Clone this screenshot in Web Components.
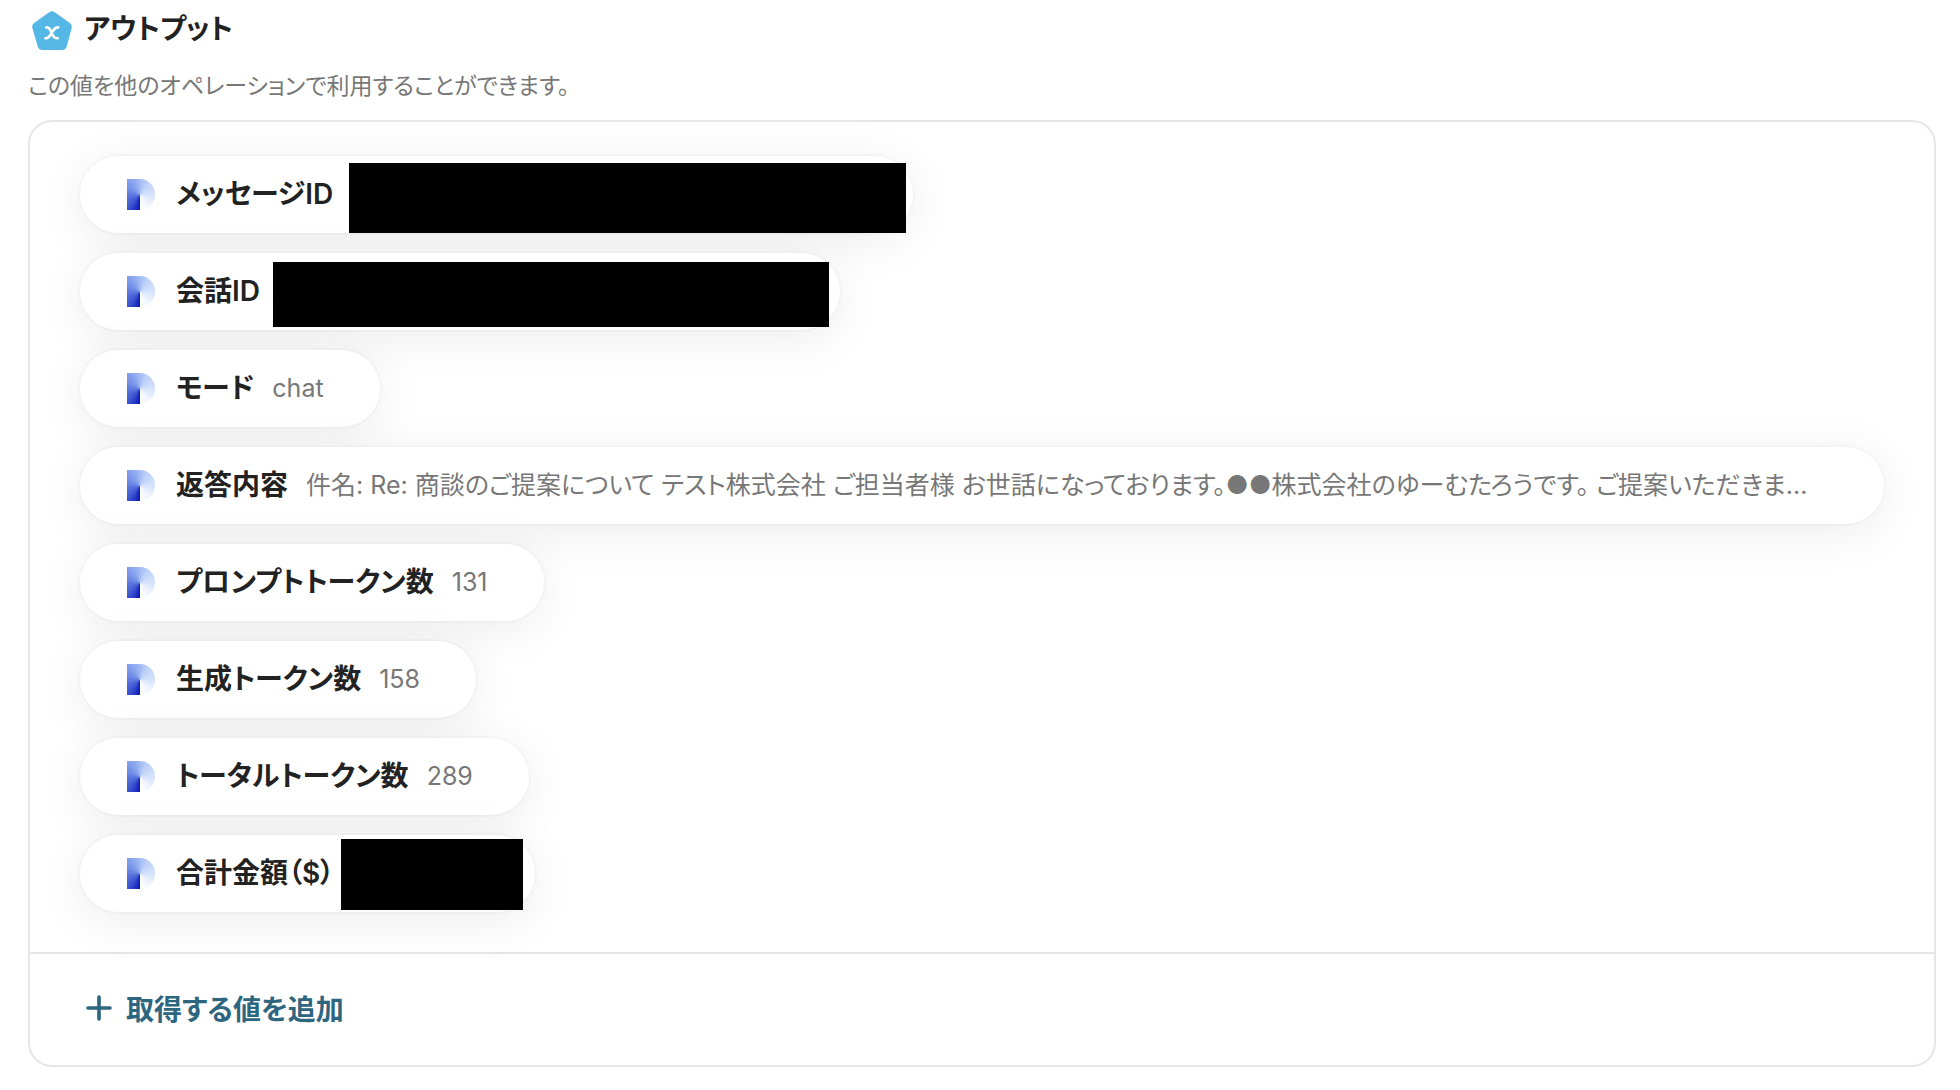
<!DOCTYPE html>
<html lang="ja">
<head>
<meta charset="utf-8">
<title>アウトプット</title>
<style>
  :root {
    --color-text: #222;
    --color-muted: #777;
    --color-border: #e6e6e6;
    --color-link: #2e6680;
    --text-sm: 23px;
    --text-md: 25px;
    --text-lg: 28px;
  }

  * {
    box-sizing: border-box;
  }

  body {
    margin: 0;
    background: #fff;
    color: var(--color-text);
    font-family: Inter, "Noto Sans CJK JP", sans-serif;
    font-feature-settings: "palt";
  }
</style>
</head>
<body>
<output-section>
  <span slot="title">アウトプット</span>
  <span slot="description">この値を他のオペレーションで利用することができます。</span>
  <output-pill label="メッセージID"><redacted-value style="--room: 506px; --width: 557px; --inset: 7px 7px 0 auto"></redacted-value></output-pill>
  <output-pill label="会話ID"><redacted-value style="--room: 506px; --width: 556px; --inset: 9px 11px 3px auto"></redacted-value></output-pill>
  <output-pill label="モード">chat</output-pill>
  <output-pill label="返答内容" wide>件名: Re: 商談のご提案について テスト株式会社 ご担当者様 お世話になっております。●●株式会社のゆーむたろうです。 ご提案いただきま...</output-pill>
  <output-pill label="プロンプトトークン数">131</output-pill>
  <output-pill label="生成トークン数">158</output-pill>
  <output-pill label="トータルトークン数">289</output-pill>
  <output-pill label="合計金額（$）"><redacted-value style="--room: 127px; --width: 182px; --inset: 4px 12px 2px auto"></redacted-value></output-pill>
  <add-button slot="footer">取得する値を追加</add-button>
</output-section>

<script>
/* Card with a heading, a list of pills and a footer */
class OutputSection extends HTMLElement {
  constructor() {
    super();
    this.attachShadow({ mode: 'open' });
  }

  connectedCallback() {
    this.shadowRoot.innerHTML = `
      <style>
        :host {
          display: block;
          padding: 8px 24px 24px 28px;
        }

        header {
          display: flex;
          align-items: center;
          gap: 10px;
          height: 44px;
          padding-left: 2px;
        }

        header svg {
          flex: none;
          width: 44px;
          height: 44px;
        }

        h2 {
          margin: 0;
          padding-bottom: 2px;
          font-size: var(--text-lg);
          font-weight: 600;
          line-height: 42px;
        }

        p {
          margin: 16px 0;
          color: var(--color-muted);
          font-size: var(--text-sm);
          line-height: 36px;
        }

        .card {
          border: 2px solid var(--color-border);
          border-radius: 24px;
          overflow: hidden;
        }

        .list {
          display: flex;
          flex-direction: column;
          align-items: flex-start;
          gap: 20px;
          padding: 34px 50px 40px;
        }

        footer {
          padding: 26px 56px 30px;
          border-top: 2px solid var(--color-border);
        }
      </style>

      <header>
        <svg viewBox="0 0 44 44" aria-hidden="true">
          <path d="M19.200 4.300 Q22 2.400 24.800 4.300 L39.800 15 Q42.500 17 41.600 20.200 L36.700 38.500 Q35.500 42 32 42 H12.500 Q9 42 7.800 38.500 L2.400 20.200 Q1.500 17 4.200 15 Z" fill="#55b7e5"/>
          <path d="M16.200 19.400 C18.800 19.200 19.600 20.600 20.400 22.300 L23 27.500 C24 29.600 25.200 30.500 27.800 30.200 M28.200 19.400 C25.800 19.300 24.600 20.600 23.400 22.300 L20 27.500 C18.800 29.400 17.600 30.400 15.400 30.300" fill="none" stroke="#fff" stroke-width="2.600" stroke-linecap="round"/>
        </svg>
        <h2><slot name="title"></slot></h2>
      </header>
      <p><slot name="description"></slot></p>
      <div class="card">
        <div class="list"><slot></slot></div>
        <footer><slot name="footer"></slot></footer>
      </div>
    `;
  }
}

/* One output: service mark, label, value */
class OutputPill extends HTMLElement {
  constructor() {
    super();
    this.attachShadow({ mode: 'open' });
  }

  connectedCallback() {
    const label = this.getAttribute('label') || '';

    this.shadowRoot.innerHTML = `
      <style>
        :host {
          position: relative;
          display: flex;
          align-items: center;
          box-sizing: border-box;
          max-width: 100%;
          height: 77px;
          padding: 0 56px 0 47px;
          border-radius: 39px;
          background: #fff;
          box-shadow: 0 0 0 2px rgba(0, 0, 0, 0.02), 0 8px 48px rgba(0, 0, 0, 0.08);
          white-space: nowrap;
        }

        :host([wide]) {
          width: 100%;
        }

        .mark {
          flex: none;
          width: 28px;
          height: 31px;
          margin-right: 21px;
          border-radius: 0 15px 15px 0;
          background: conic-gradient(from 180deg at 13px 16px, #0a19b8, #3e57d2 12%, #6f8ce6 32%, #8faaf0 44%, #bcd0f8 58%, #d6e3fb 75%, #f0f4fe 88%, #fff);
        }

        .label,
        .value {
          padding-bottom: 2px;
        }

        .label {
          flex: none;
          margin-right: 18px;
          font-size: var(--text-lg);
          font-weight: 600;
          line-height: 42px;
        }

        .value {
          overflow: hidden;
          color: var(--color-muted);
          font-size: var(--text-md);
          line-height: 38px;
          text-overflow: ellipsis;
        }
      </style>

      <span class="mark"></span>
      <span class="label">${label}</span>
      <span class="value"><slot></slot></span>
    `;
  }
}

/* Black bar laid over a hidden value */
class RedactedValue extends HTMLElement {
  constructor() {
    super();
    this.attachShadow({ mode: 'open' });
  }

  connectedCallback() {
    this.shadowRoot.innerHTML = `
      <style>
        :host {
          display: inline-block;
          width: var(--room);
        }

        .bar {
          position: absolute;
          inset: var(--inset);
          width: var(--width);
          background: #000;
        }
      </style>

      <span class="bar"></span>
    `;
  }
}

class AddButton extends HTMLElement {
  constructor() {
    super();
    this.attachShadow({ mode: 'open' });
  }

  connectedCallback() {
    this.shadowRoot.innerHTML = `
      <style>
        :host {
          display: block;
        }

        button {
          display: flex;
          align-items: center;
          gap: 14px;
          height: 55px;
          padding: 0;
          border: 0;
          background: none;
          color: var(--color-link);
          font: inherit;
          font-feature-settings: inherit;
          font-size: var(--text-lg);
          font-weight: 600;
          cursor: pointer;
        }

        svg {
          width: 26px;
          height: 26px;
        }
      </style>

      <button type="button">
        <svg viewBox="0 0 26 26" aria-hidden="true">
          <path d="M13 2V24M2 13H24" stroke="currentColor" stroke-width="3.600" stroke-linecap="round"/>
        </svg>
        <slot></slot>
      </button>
    `;
  }
}

customElements.define('output-section', OutputSection);
customElements.define('output-pill', OutputPill);
customElements.define('redacted-value', RedactedValue);
customElements.define('add-button', AddButton);
</script>
</body>
</html>
